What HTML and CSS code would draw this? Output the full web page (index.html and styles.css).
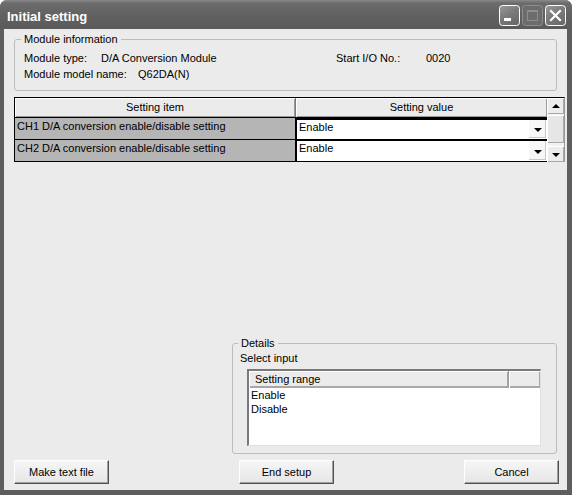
FILE: index.html
```html
<!DOCTYPE html>
<html>
<head>
<meta charset="utf-8">
<link rel="stylesheet" href="styles.css">
</head>
<body>
<div class="window">
  <div class="titlebar">
    <span class="title">Initial setting</span>
    <div class="tb-buttons">
      <svg class="tb-btn" width="21" height="21" viewBox="0 0 21 21">
        <defs>
          <linearGradient id="gb" x1="0" y1="0" x2="0.6" y2="1">
            <stop offset="0" stop-color="#9a9a9a"/>
            <stop offset="0.5" stop-color="#7c7c7c"/>
            <stop offset="1" stop-color="#6a6a6a"/>
          </linearGradient>
        </defs>
        <rect x="0.5" y="0.5" width="20" height="20" rx="3" fill="url(#gb)" stroke="#fff"/>
        <rect x="5" y="13" width="7" height="3" fill="#fff"/>
      </svg>
      <svg class="tb-btn" width="21" height="21" viewBox="0 0 21 21">
        <rect x="0.5" y="0.5" width="20" height="20" rx="3" fill="#6c6c6c" stroke="#8e8e8e"/>
        <rect x="5.5" y="5.5" width="10" height="10" fill="none" stroke="#8e8e8e"/>
        <rect x="5" y="5" width="11" height="2" fill="#8e8e8e"/>
      </svg>
      <svg class="tb-btn" width="21" height="21" viewBox="0 0 21 21">
        <rect x="0.5" y="0.5" width="20" height="20" rx="3" fill="url(#gb)" stroke="#fff"/>
        <path d="M6 6 L15 15 M15 6 L6 15" stroke="#fff" stroke-width="2.2" stroke-linecap="square"/>
      </svg>
    </div>
  </div>
  <div class="client">
    <fieldset class="group modinfo">
      <legend>Module information</legend>
      <div class="info-row">
        <span class="lbl-type">Module type:</span>
        <span class="val-type">D/A Conversion Module</span>
        <span class="lbl-io">Start I/O No.:</span>
        <span>0020</span>
      </div>
      <div class="info-row">
        <span class="lbl-model">Module model name:</span>
        <span>Q62DA(N)</span>
      </div>
    </fieldset>

    <div class="grid">
      <div class="grid-main">
        <div class="grid-row head">
          <div class="c-item">Setting item</div>
          <div class="c-value">Setting value</div>
        </div>
        <div class="grid-row">
          <div class="c-item">CH1 D/A conversion enable/disable setting</div>
          <div class="c-value">
            <div class="combo focus"><span class="combo-text">Enable</span><span class="drop"><span class="tri"></span></span></div>
          </div>
        </div>
        <div class="grid-row">
          <div class="c-item">CH2 D/A conversion enable/disable setting</div>
          <div class="c-value">
            <div class="combo"><span class="combo-text">Enable</span><span class="drop"><span class="tri"></span></span></div>
          </div>
        </div>
      </div>
      <div class="vscroll">
        <div class="sb-btn"><span class="tri up"></span></div>
        <div class="sb-thumb"></div>
        <div class="sb-btn"><span class="tri"></span></div>
      </div>
    </div>

    <fieldset class="group details">
      <legend>Details</legend>
      <div class="sel-label">Select input</div>
      <div class="listview">
        <div class="lv-head">
          <div class="lv-col1">Setting range</div>
          <div class="lv-col2"></div>
        </div>
        <div class="lv-item">Enable</div>
        <div class="lv-item">Disable</div>
      </div>
    </fieldset>

    <div class="buttons">
      <button class="btn">Make text file</button>
      <button class="btn">End setup</button>
      <button class="btn">Cancel</button>
    </div>
  </div>
</div>
</body>
</html>
```

FILE: styles.css
```css
* { box-sizing: border-box; }
html, body { margin: 0; padding: 0; background: #ffffff; }
body {
  font-family: "Liberation Sans", Arial, sans-serif;
  font-size: 11px;
  color: #000;
}

.window {
  width: 572px;
  height: 495px;
  display: flex;
  flex-direction: column;
  background: #5e5e5e;
  border-radius: 7px 7px 0 0;
  overflow: hidden;
  padding: 0 5px 5px 4px;
}

.titlebar {
  height: 29px;
  flex: none;
  display: flex;
  align-items: flex-start;
  margin: 0 -5px 0 -4px;
  padding: 5px 6px 0 7px;
  background: linear-gradient(#8a8a8a 0, #6c6c6c 3px, #626262 50%, #5a5a5a 100%);
}
.title {
  flex: 1;
  margin-top: 4px;
  font-weight: bold;
  font-size: 13px;
  line-height: 15px;
  color: #fff;
}
.tb-buttons { display: flex; gap: 2px; }
.tb-btn { display: block; }

.client {
  flex: 1;
  background: #ebebeb;
  display: flex;
  flex-direction: column;
  padding: 0 0 6px 0;
}

.group {
  margin: 0;
  padding: 0;
  border: 1px solid #bcbcbc;
  border-radius: 3px;
  min-width: 0;
}
.group legend {
  padding: 0 3px 0 3px;
  line-height: 13px;
}

.modinfo {
  margin: 4px 10px 0 10px;
  padding: 4px 0 8px 9px;
}
.modinfo legend { margin-left: -3px; }
.info-row {
  display: flex;
  height: 16px;
  line-height: 16px;
  white-space: nowrap;
}
.lbl-type { width: 77px; }
.val-type { width: 235px; }
.lbl-io { width: 90px; }
.lbl-model { width: 114px; }

.grid {
  margin: 6px 2px 0 10px;
  display: flex;
  border-top: 1px solid #000;
  border-left: 1px solid #000;
  border-right: 1px solid #9a9a9a;
}
.grid-main { flex: 1; display: flex; flex-direction: column; }
.grid-row { display: flex; height: 22px; border-bottom: 1px solid #000; }
.grid-row.head {
  height: 20px;
  border-bottom: 1px solid #000;
}
.c-item {
  width: 281px;
  flex: none;
  background: #b5b5b5;
  border-right: 1px solid #000;
  padding: 2px 0 0 2px;
  line-height: 13px;
  white-space: nowrap;
}
.c-value { flex: 1; background: #fff; display: flex; }
.head .c-item, .head .c-value {
  background: #ebebeb;
  justify-content: center;
  text-align: center;
  padding: 0;
  line-height: 19px;
  box-shadow: inset 1px 1px #fff, inset -1px -1px #9a9a9a;
}
.head .c-item { border-right-color: #7a7a7a; }
.combo {
  flex: 1;
  display: flex;
  border-top: 1px solid #000;
  border-left: 1px solid #000;
  background: #fff;
}
.combo.focus { border-top-width: 2px; }
.combo-text { flex: 1; padding: 1px 0 0 2px; line-height: 13px; }
.drop {
  width: 17px;
  flex: none;
  display: flex;
  align-items: center;
  justify-content: center;
  margin: 0 1px 1px 0;
  background: #f7f7f7;
  box-shadow: inset -1px -1px #c8c8c8;
}
.tri {
  width: 0;
  height: 0;
  border-left: 4px solid transparent;
  border-right: 4px solid transparent;
  border-top: 4px solid #000;
  margin-top: 2px;
}
.tri.up { border-top: 0; border-bottom: 4px solid #000; margin-top: 0; }

.vscroll {
  width: 17px;
  flex: none;
  display: flex;
  flex-direction: column;
  background: #f2f2f2;
}
.sb-btn {
  height: 16px;
  flex: none;
  display: flex;
  align-items: center;
  justify-content: center;
  background: #ececec;
  box-shadow: inset 1px 1px #fff, inset -1px -1px #a8a8a8;
}
.sb-thumb {
  flex: 1;
  margin: 1px 0 3px 0;
  background: #e6e6e6;
  box-shadow: inset 1px 1px #fff, inset -1px -1px #a8a8a8;
}

.details {
  margin: auto 10px 0 228px;
  padding: 2px 15px 7px 14px;
}
.details legend { margin-left: -9px; }
.sel-label {
  margin-left: -7px;
  line-height: 13px;
  margin-bottom: 4px;
}
.listview {
  height: 77px;
  background: #fff;
  border-top: 2px solid #7a7a7a;
  border-left: 2px solid #7a7a7a;
  border-right: 1px solid #e0e0e0;
  border-bottom: 1px solid #e0e0e0;
}
.lv-head { display: flex; height: 17px; }
.lv-col1, .lv-col2 {
  background: #ebebeb;
  box-shadow: inset 1px 1px #fff, inset -1px -2px #a8a8a8;
  line-height: 16px;
}
.lv-col1 { width: 260px; padding-left: 6px; border-right: 1px solid #9a9a9a; }
.lv-col2 { flex: 1; }
.lv-item { line-height: 14px; padding-left: 2px; }

.buttons {
  margin-top: 6px;
  display: flex;
  justify-content: space-between;
  padding: 0 8px 0 10px;
}
.btn {
  width: 95px;
  height: 24px;
  font: inherit;
  color: #000;
  background: linear-gradient(#f6f6f6, #e6e6e6);
  border: 1px solid;
  border-color: #ffffff #505050 #505050 #ffffff;
  box-shadow: inset -1px -1px #a0a0a0;
  padding: 0;
}
```
